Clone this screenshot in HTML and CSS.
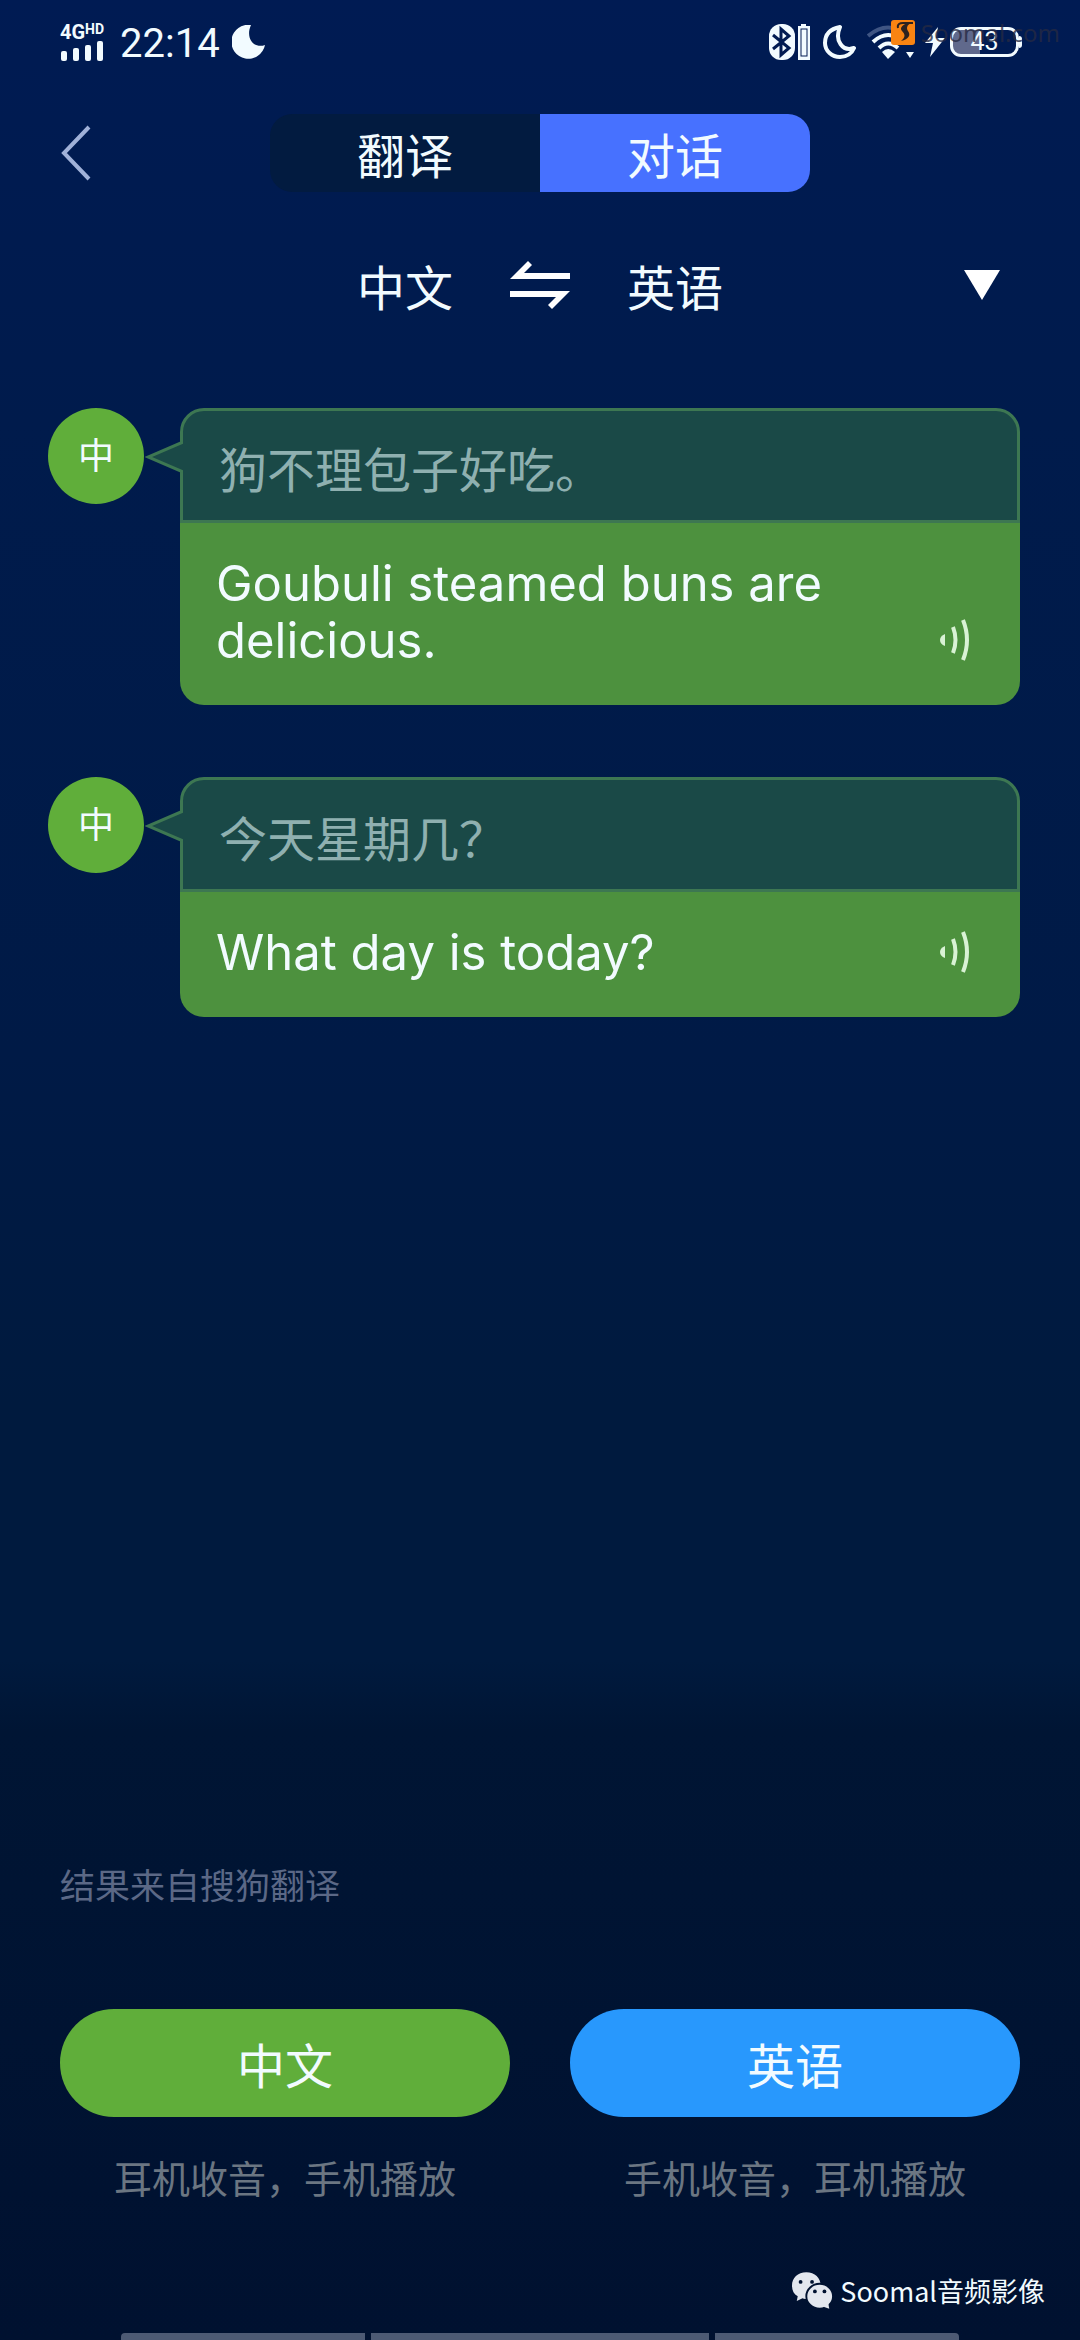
FILE: index.html
```html
<!DOCTYPE html>
<html lang="zh-CN">
  <head>
    <meta charset="UTF-8" />
    <title>对话翻译</title>
    <meta name="viewport" content="width=device-width, initial-scale=1.0" />
    <link rel="stylesheet" href="styles.css">
  </head>
  <body>
    <!-- Status bar -->
    <div class="status-bar">
      <div class="status-left">
        <div class="signal">
          <span class="signal-type">4G<sup>HD</sup></span>
          <svg width="44" height="20" viewBox="0 0 44 20" fill="#f2fbff">
            <rect x="1" y="10" width="6" height="10" rx="2" />
            <rect x="13" y="7" width="6" height="13" rx="2" />
            <rect x="25" y="4" width="6" height="16" rx="2" />
            <rect x="37" y="0" width="6" height="20" rx="2" />
          </svg>
        </div>
        <span class="clock">22:14</span>
        <svg width="34" height="34" viewBox="0 0 34 34" fill="#f2fbff">
          <path d="M19 0A17 17 0 1 0 33 20C22 24 13 13 19 0Z" />
        </svg>
      </div>
      <div class="status-right">
        <svg width="41" height="36" viewBox="0 0 41 36">
          <rect x="0" y="0" width="26" height="36" rx="12" fill="#f2fbff" />
          <path d="M4 11L20 24L12 31V5L20 12L4 25" fill="none" stroke="#011b52" stroke-width="3" />
          <path d="M32 0H37V2H41V36H29V2H32Z" fill="#f2fbff" />
          <rect x="32" y="5" width="6" height="27" fill="none" stroke="#011b52" stroke-width="1" />
          <rect x="33" y="6" width="4" height="25" fill="#f2fbff" />
        </svg>
        <svg width="37" height="34" viewBox="0 0 37 34">
          <path d="M20 2C10 4 5 10 5 18C5 26 12 32 20 32C27 32 32 28 34 23C23 27 14 16 20 2Z" fill="none" stroke="#f2fbff" stroke-width="4" stroke-linejoin="round" />
        </svg>
        <svg width="48" height="34" viewBox="0 0 48 34">
          <g fill="none" stroke="#f2fbff" stroke-width="4">
            <path d="M1 11Q21 -6 41 11" stroke="#3f5583" />
            <path d="M6 17Q21 3 37 17" />
            <path d="M12 23Q21 14 31 23" />
          </g>
          <path d="M15 27Q21 21 28 27L21 34Z" fill="#f2fbff" />
          <path d="M39 27H47L43 33Z" fill="#f2fbff" />
        </svg>
        <svg width="20" height="30" viewBox="0 0 20 30" fill="#f2fbff">
          <path d="M13 0L0 16H8L5 30L20 11H11Z" />
        </svg>
        <div class="battery"><span>43</span></div>
      </div>
      <div class="site-mark">
        <svg width="24" height="25" viewBox="0 0 24 25">
          <rect width="24" height="25" rx="3" fill="#f98412" />
          <path d="M7 8C6 4 9 3 12 3H22" fill="none" stroke="#2c2220" stroke-width="2" />
          <path d="M20 3C16 5 15 8 17 11C20 15 18 19 10 21C15 17 14 14 11 11C8 8 12 3 20 3Z" fill="#2c2220" />
        </svg>
        <span>Soomal.com</span>
      </div>
    </div>

    <header class="top-bar">
      <button class="back" type="button" aria-label="返回">
        <svg width="32" height="56" viewBox="0 0 32 56">
          <path d="M29 2L4 28L29 54" fill="none" stroke="#a0b1d8" stroke-width="4" />
        </svg>
      </button>
      <nav class="tabs">
        <button class="tab" type="button">翻译</button>
        <button class="tab active" type="button">对话</button>
      </nav>
    </header>

    <div class="languages">
      <div class="language-pair">
        <button type="button">中文</button>
        <button type="button" aria-label="交换语言">
          <svg width="60" height="48" viewBox="0 0 60 48" fill="#fff">
            <path d="M0 18L18 0L22 4L14 12H60V18Z" />
            <path d="M60 30L42 48L38 44L46 36H0V30Z" />
          </svg>
        </button>
        <button type="button">英语</button>
      </div>
      <button class="more" type="button" aria-label="更多">
        <svg width="36" height="30" viewBox="0 0 36 30" fill="#fff">
          <path d="M0 0H36L18 30Z" />
        </svg>
      </button>
    </div>

    <!-- Conversation -->
    <main class="messages">
      <article class="message">
        <div class="avatar">中</div>
        <div class="bubble">
          <svg class="tail" width="38" height="32" viewBox="0 0 38 32">
            <path d="M38 1L3 16L38 31" fill="#1a4947" stroke="#3d7752" stroke-width="3" />
          </svg>
          <p class="source">狗不理包子好吃。</p>
          <div class="result">
            <p>Goubuli steamed buns are delicious.</p>
            <button class="play" type="button" aria-label="播放">
              <svg width="30" height="42" viewBox="0 0 30 42">
                <path d="M5 15V27Q0 25 0 21Q0 17 5 15Z" fill="#d9f2d5" />
                <path d="M13 8Q18 21 13 34M23 1Q31 21 23 41" fill="none" stroke="#d9f2d5" stroke-width="4" />
              </svg>
            </button>
          </div>
        </div>
      </article>

      <article class="message">
        <div class="avatar">中</div>
        <div class="bubble">
          <svg class="tail" width="38" height="32" viewBox="0 0 38 32">
            <path d="M38 1L3 16L38 31" fill="#1a4947" stroke="#3d7752" stroke-width="3" />
          </svg>
          <p class="source">今天星期几？</p>
          <div class="result">
            <p>What day is today?</p>
            <button class="play" type="button" aria-label="播放">
              <svg width="30" height="42" viewBox="0 0 30 42">
                <path d="M5 15V27Q0 25 0 21Q0 17 5 15Z" fill="#d9f2d5" />
                <path d="M13 8Q18 21 13 34M23 1Q31 21 23 41" fill="none" stroke="#d9f2d5" stroke-width="4" />
              </svg>
            </button>
          </div>
        </div>
      </article>
    </main>

    <footer>
      <p class="credit">结果来自搜狗翻译</p>
      <div class="speakers">
        <div class="speaker">
          <button class="speak chinese" type="button">中文</button>
          <p>耳机收音，手机播放</p>
        </div>
        <div class="speaker">
          <button class="speak english" type="button">英语</button>
          <p>手机收音，耳机播放</p>
        </div>
      </div>
      <div class="account">
        <svg width="42" height="37" viewBox="0 0 44 38">
          <path d="M15 0C6 0 0 6 0 14C0 19 2 23 6 25L5 30L11 27C13 28 15 28 17 28C30 28 30 18 30 14C30 6 24 0 15 0Z" fill="#e3e7ee" />
          <ellipse cx="29" cy="25" rx="14" ry="13" fill="#e3e7ee" stroke="#001230" stroke-width="2" />
          <path d="M33 36L39 38L38 32Z" fill="#e3e7ee" />
          <g fill="#001230">
            <circle cx="9" cy="10" r="2" />
            <circle cx="21" cy="10" r="2" />
            <circle cx="24" cy="20" r="2" />
            <circle cx="34" cy="20" r="2" />
          </g>
        </svg>
        <span>Soomal音频影像</span>
      </div>
      <div class="gesture-bar">
        <span></span>
        <span></span>
        <span></span>
      </div>
    </footer>
  </body>
</html>
```

FILE: styles.css
```css
/* General Styling */
* {
  box-sizing: border-box;
}
body {
  margin: 0;
  min-height: 100vh;
  display: flex;
  flex-direction: column;
  font-family: Inter, "Noto Sans CJK SC", sans-serif;
  font-weight: 400;
  color: #f2fbff;
  background: linear-gradient(
    #001b53 0%,
    #001b4c 18%,
    #001a46 45%,
    #001a3e 60%,
    #001a3e 71%,
    #001534 74%,
    #001130 100%
  );
}
p {
  margin: 0;
}
button {
  padding: 0;
  border: none;
  background: none;
  color: inherit;
  font: inherit;
  font-size: 48px;
  cursor: pointer;
}
svg {
  display: block;
}

/* Status Bar */
.status-bar {
  position: relative;
  display: flex;
  justify-content: space-between;
  height: 114px;
  padding: 20px 61px 0 60px;
}
.status-left,
.status-right {
  display: flex;
  align-items: center;
  height: 44px;
}
.signal-type {
  display: flex;
  font: 700 20px/18px Roboto, sans-serif;
}
.signal-type sup {
  font-size: 14px;
  line-height: 12px;
}
.clock {
  margin: 4px 12px 0 16px;
  font: 400 40px/40px Roboto, sans-serif;
}
.status-right {
  gap: 10px;
}
.battery {
  position: relative;
  width: 69px;
  height: 30px;
  margin-left: -5px;
  border: 3px solid #f2fbff;
  border-radius: 11px;
  background: linear-gradient(90deg, #60698c 43%, transparent 43%);
  font: 400 25px/24px Roboto, sans-serif;
  text-align: center;
}
.battery::after {
  content: "";
  position: absolute;
  right: -6px;
  top: 6px;
  width: 3px;
  height: 12px;
  border-radius: 0 3px 3px 0;
  background: #f2fbff;
}
.site-mark {
  position: absolute;
  top: 20px;
  right: 20px;
  display: flex;
  gap: 6px;
  font: 400 24px/25px "Noto Sans", sans-serif;
  color: rgba(38, 42, 66, 0.8);
}

/* Top Bar */
.top-bar {
  display: grid;
  grid-template-columns: 1fr 2fr 1fr;
  align-items: center;
}
.back {
  justify-self: start;
  margin-left: 60px;
}
.tabs {
  display: flex;
  height: 78px;
  border-radius: 22px;
  overflow: hidden;
  background: #021b40;
}
.tab {
  flex: 1;
}
.tab.active {
  background: #4771ff;
}

/* Languages */
.languages {
  display: grid;
  grid-template-columns: 1fr auto 1fr;
  align-items: center;
  height: 186px;
  padding: 0 80px;
}
.language-pair {
  grid-column: 2;
  display: flex;
  align-items: center;
  gap: 57px;
}
.more {
  justify-self: end;
}

/* Messages */
.messages {
  flex: 1;
  display: flex;
  flex-direction: column;
  gap: 72px;
  padding: 30px 60px 60px 48px;
}
.message {
  display: flex;
  align-items: flex-start;
  gap: 36px;
}
.avatar {
  flex: none;
  width: 96px;
  height: 96px;
  border-radius: 50%;
  background: #60ae3a;
  font-size: 36px;
  line-height: 96px;
  text-align: center;
}
.bubble {
  position: relative;
  flex: 1;
}
.tail {
  position: absolute;
  top: 33px;
  left: -35px;
}
.source {
  padding: 26px 36px 15px;
  border: 3px solid #3d7752;
  border-radius: 24px 24px 0 0;
  background: #1a4947;
  color: #8fb0b0;
  font-size: 48px;
  line-height: 68px;
}
.result {
  display: flex;
  justify-content: space-between;
  align-items: flex-end;
  padding: 32px 50px 36px 36px;
  border-radius: 0 0 24px 24px;
  background: #4d913e;
}
.result p {
  max-width: 640px;
  font-size: 49px;
  line-height: 57px;
}
.play {
  padding-bottom: 8px;
}

/* Footer */
.credit {
  padding: 0 60px;
  color: #5b6886;
  font-size: 35px;
  line-height: 50px;
}
.speakers {
  display: flex;
  gap: 60px;
  padding: 98px 60px 0;
}
.speaker {
  flex: 1;
  text-align: center;
}
.speak {
  width: 100%;
  height: 108px;
  border-radius: 54px;
}
.chinese {
  background: #60ae3a;
}
.english {
  background: #2898fd;
}
.speaker p {
  margin-top: 34px;
  color: #6b7682;
  font-size: 38px;
  line-height: 56px;
}
.account {
  display: flex;
  justify-content: flex-end;
  align-items: center;
  gap: 6px;
  height: 40px;
  margin-top: 63px;
  padding-right: 35px;
  font-family: "Noto Sans CJK SC", sans-serif;
  font-size: 27px;
}
.gesture-bar {
  display: flex;
  gap: 6px;
  margin-top: 23px;
  padding: 0 121px;
}
.gesture-bar span {
  flex: 244;
  height: 7px;
  background: #4d5a74;
}
.gesture-bar span:first-child {
  border-top-left-radius: 4px;
}
.gesture-bar span:nth-child(2) {
  flex: 338;
}
.gesture-bar span:last-child {
  border-top-right-radius: 4px;
}
```
